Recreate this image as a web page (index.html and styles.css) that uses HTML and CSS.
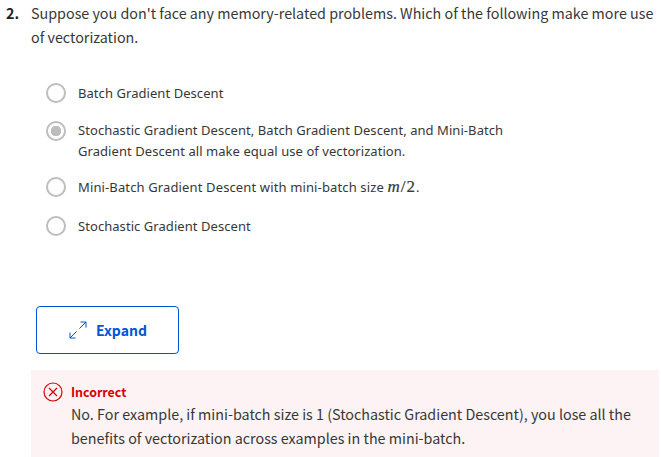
FILE: index.html
```html
<!DOCTYPE html>
<html lang="en"><head><meta charset="utf-8"><title>Quiz</title><link rel="stylesheet" href="styles.css"></head>
<body>
<main class="quiz">
<section class="question"><b class="number">2.</b><p class="prompt"><span class="line l1">Suppose you don't face any memory-related problems. Which of the following make more use</span><span class="line l2">of vectorization.</span></p></section>
<ul class="options">
<li class="option first"><i class="radio"></i><span class="label"><span class="line o1">Batch Gradient Descent</span></span></li>
<li class="option second"><i class="radio checked"></i><span class="label"><span class="line o2">Stochastic Gradient Descent, Batch Gradient Descent, and Mini-Batch</span><span class="line o3">Gradient Descent all make equal use of vectorization.</span></span></li>
<li class="option third"><i class="radio"></i><span class="label"><span class="line o4">Mini-Batch Gradient Descent with mini-batch size <span class="math"><em>m</em>/2</span>.</span></span></li>
<li class="option"><i class="radio"></i><span class="label"><span class="line o5">Stochastic Gradient Descent</span></span></li>
</ul>
<button class="expand"><svg class="arrows" viewBox="0 0 18 18"><path d="M10.500 7.500 17 1M11.500 1H17v5.500M7.500 10.500 1 17M1 11.500V17h5.500"/></svg><span class="line ex">Expand</span></button>
<section class="feedback"><svg class="wrong" viewBox="0 0 20 20"><circle cx="10" cy="10" r="9"/><path d="m6 6 8 8m0-8-8 8"/></svg><div><h2><span class="line inc">Incorrect</span></h2><p><span class="line f1">No. For example, if mini-batch size is 1 (Stochastic Gradient Descent), you lose all the</span><span class="line f2">benefits of vectorization across examples in the mini-batch.</span></p></div></section>
</main>
</body></html>
```
FILE: styles.css
```css
* { box-sizing: border-box; }
body { margin: 0; background: #fff; color: #373737; font-family: "Noto Sans CJK SC", "Noto Sans", sans-serif; overflow: hidden; }
p, h2, ul { margin: 0; padding: 0; }
.line { display: block; width: max-content; white-space: nowrap; }
.quiz { height: 457px; display: flex; flex-direction: column; }
.question { display: flex; padding: 1px 0 0 6px; font-size: 14.320px; line-height: 24px; }
.number { width: 25px; flex: none; color: #1f1f1f; }
.options { list-style: none; margin-top: 34px; padding-left: 46px; font-family: "Noto Sans", sans-serif; font-size: 13px; line-height: 21px; letter-spacing: .06px; }
.option { display: flex; gap: 12px; }
.first { margin-bottom: 16px; }
.second { margin-bottom: 15px; }
.third { margin-bottom: 18px; letter-spacing: .13px; }
.radio { width: 20px; height: 20px; border: 2px solid #bdbdbd; border-radius: 50%; flex: none; }
.checked { margin-top: 1px; background: radial-gradient(circle, #bdbdbd 5px, #fff 5.500px); }
.math { font-family: "Liberation Serif", serif; font-size: 17px; line-height: 1; letter-spacing: 1px; -webkit-text-stroke: .2px #333; }
.expand { margin: 69px 0 0 36px; width: 143px; height: 48px; border: 1px solid #0056d2; border-radius: 4px; background: #fff; color: #0056d2; font: 700 14px/20px "Noto Sans CJK SC", sans-serif; display: flex; align-items: center; padding: 0 0 0 32px; gap: 9px; flex: none; }
.arrows { width: 18px; height: 18px; fill: none; stroke: currentColor; stroke-width: 1; }
.feedback { margin: 16px 2px 0 31px; flex: 1; background: #fdf3f4; display: flex; padding: 12px 0 0 12px; gap: 8px; font-size: 14.320px; line-height: 24px; }
.wrong { width: 20px; height: 20px; fill: none; stroke: #d30001; stroke-width: 1.200; flex: none; }
h2 { color: #d30001; font-size: 12.400px; line-height: 20px; }
```
